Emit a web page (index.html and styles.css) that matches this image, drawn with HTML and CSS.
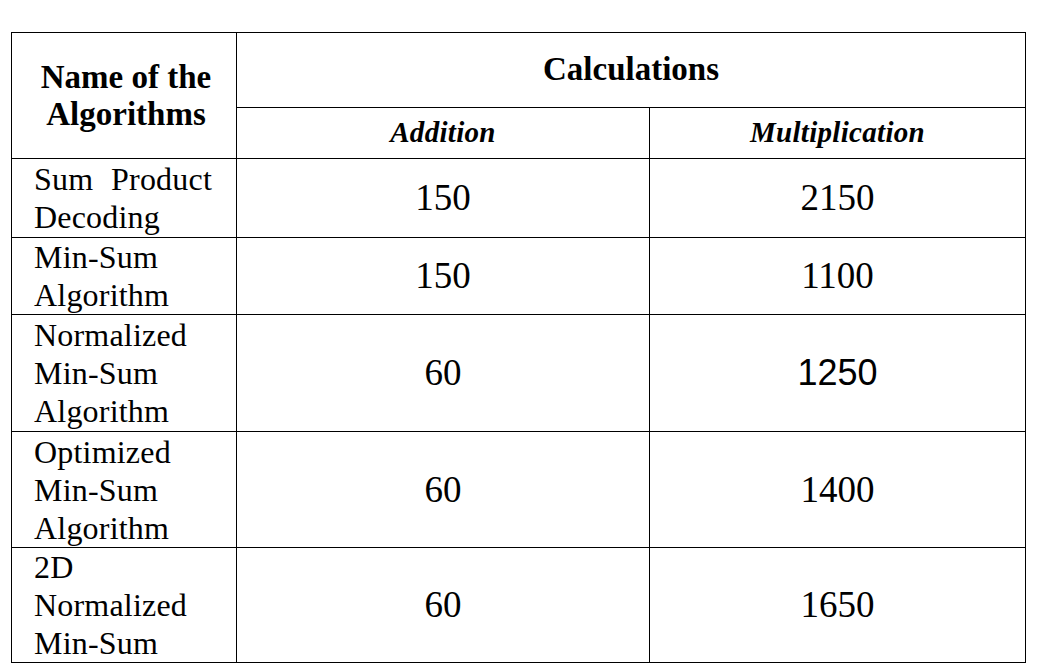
FILE: index.html
```html
<!DOCTYPE html>
<html>
<head>
<meta charset="utf-8">
<link rel="stylesheet" href="styles.css">
</head>
<body>
<table class="tbl">
  <colgroup>
    <col class="c1">
    <col class="c2">
    <col class="c3">
  </colgroup>
  <thead>
    <tr class="h1">
      <th rowspan="2" class="name-head">Name of the Algorithms</th>
      <th colspan="2" class="calc-head">Calculations</th>
    </tr>
    <tr class="h2">
      <th class="sub-head">Addition</th>
      <th class="sub-head">Multiplication</th>
    </tr>
  </thead>
  <tbody>
    <tr class="r1">
      <td class="alg">Sum Product Decoding</td>
      <td class="num">150</td>
      <td class="num">2150</td>
    </tr>
    <tr class="r2">
      <td class="alg">Min-Sum Algorithm</td>
      <td class="num">150</td>
      <td class="num">1100</td>
    </tr>
    <tr class="r3">
      <td class="alg">Normalized Min-Sum Algorithm</td>
      <td class="num">60</td>
      <td class="num sans">1250</td>
    </tr>
    <tr class="r4">
      <td class="alg">Optimized Min-Sum Algorithm</td>
      <td class="num">60</td>
      <td class="num">1400</td>
    </tr>
    <tr class="r5">
      <td class="alg">2D Normalized Min-Sum</td>
      <td class="num">60</td>
      <td class="num">1650</td>
    </tr>
  </tbody>
</table>
</body>
</html>
```
FILE: styles.css
```css
html, body {
  margin: 0;
  padding: 0;
  background: #fff;
}
body {
  padding: 32px 0 0 11px;
  font-family: "Liberation Serif", "Times New Roman", serif;
  color: #000;
}
.tbl {
  border-collapse: collapse;
  table-layout: fixed;
  width: 1014px;
}
.c1 { width: 225px; }
.c2 { width: 413px; }
.c3 { width: 376px; }
.tbl th, .tbl td {
  border: 1px solid #000;
  padding: 0;
}
.h1 { height: 75px; }
.h2 { height: 51px; }
.r1 { height: 79px; }
.r2 { height: 76px; }
.r3 { height: 117px; }
.r4 { height: 116px; }
.r5 { height: 115px; }
.tbl .name-head {
  font-weight: bold;
  font-size: 33px;
  line-height: 37px;
  text-align: center;
  vertical-align: middle;
  padding: 0 4px 0 8px;
}
.tbl .calc-head {
  font-weight: bold;
  font-size: 33px;
  line-height: 37px;
  text-align: center;
  vertical-align: middle;
  padding-bottom: 2px;
}
.tbl .sub-head {
  font-weight: bold;
  font-style: italic;
  font-size: 29px;
  letter-spacing: 0.3px;
  line-height: 34px;
  text-align: center;
  vertical-align: middle;
  padding-bottom: 2px;
}
.tbl .alg {
  font-size: 32px;
  letter-spacing: 0.2px;
  line-height: 38px;
  text-align: justify;
  vertical-align: middle;
  padding: 0 24px 0 22px;
}
.tbl .num {
  font-size: 37px;
  line-height: 40px;
  text-align: center;
  vertical-align: middle;
}
.tbl .num.sans {
  font-family: "Liberation Sans", Arial, sans-serif;
  font-size: 36px;
}
```
